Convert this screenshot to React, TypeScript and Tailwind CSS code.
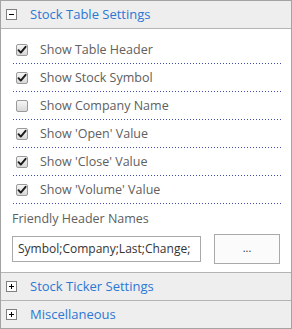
import React from "react";

function Check({ checked }: { checked: boolean }) {
  return (
    <div className="w-[12px] h-[12px] rounded-[2px] border border-[#9a9a9a] bg-[linear-gradient(to_bottom,#f6f6f6,#d8d8d8)] flex items-center justify-center shrink-0">
      {checked && (
        <svg width="10" height="10" viewBox="0 0 10 10">
          <path d="M1.5 5.2 L3.8 7.6 L8.6 1.8" stroke="#1a1a1a" strokeWidth="1.9" fill="none" strokeLinecap="round" strokeLinejoin="round" />
        </svg>
      )}
    </div>
  );
}

function Toggle({ open }: { open: boolean }) {
  return (
    <div className="w-[11px] h-[11px] border border-[#808080] bg-white relative shrink-0">
      <div className="absolute left-[2px] top-[4px] w-[5px] h-[1px] bg-black" />
      {!open && <div className="absolute left-[4px] top-[2px] w-[1px] h-[5px] bg-black" />}
    </div>
  );
}

function Header({ title, open }: { title: string; open: boolean }) {
  return (
    <div className="h-[27px] bg-[#eeeeee] flex items-center pl-[5px] gap-[13px]">
      <Toggle open={open} />
      <span className="text-[13px] text-[#2b77d4] leading-none">{title}</span>
    </div>
  );
}

const rows: [string, boolean][] = [
  ["Show Table Header", true],
  ["Show Stock Symbol", true],
  ["Show Company Name", false],
  ["Show 'Open' Value", true],
  ["Show 'Close' Value", true],
  ["Show 'Volume' Value", true],
];

export default function App() {
  return (
    <div className="w-[292px] h-[329px] border border-[#a3a3a3] bg-white flex flex-col font-['Open_Sans',sans-serif] overflow-hidden">
      <div className="border-b border-[#b4b4b4]">
        <Header title="Stock Table Settings" open={true} />
      </div>
      <div className="flex-1 pl-[11px] pr-[10px] pt-[7px]">
        {rows.map(([label, checked]) => (
          <div
            key={label}
            className="h-[28px] flex items-center pl-[4px] gap-[12px] bg-[linear-gradient(to_right,#3d4fae_1px,transparent_1px)] bg-[length:3px_1px] bg-repeat-x bg-bottom"
          >
            <Check checked={checked} />
            <span className="text-[12.5px] text-[#606060] leading-none">{label}</span>
          </div>
        ))}
        <div className="pt-[9px] text-[12.5px] text-[#606060] leading-none">Friendly Header Names</div>
        <div className="flex items-center mt-[8px]">
          <div className="w-[189px] h-[26px] border border-[#a9a9a9] bg-white flex items-center pl-[5px] text-[12px] text-[#333] overflow-hidden whitespace-nowrap">
            Symbol;Company;Last;Change;
          </div>
          <div className="ml-[13px] w-[66px] h-[30px] border border-[#a9a9a9] bg-[#fbfbfb] flex items-center justify-center text-[11px] text-[#333]">
            ...
          </div>
        </div>
      </div>
      <div className="border-t border-[#b4b4b4]">
        <Header title="Stock Ticker Settings" open={false} />
      </div>
      <div className="border-t border-[#b4b4b4]">
        <Header title="Miscellaneous" open={false} />
      </div>
    </div>
  );
}
